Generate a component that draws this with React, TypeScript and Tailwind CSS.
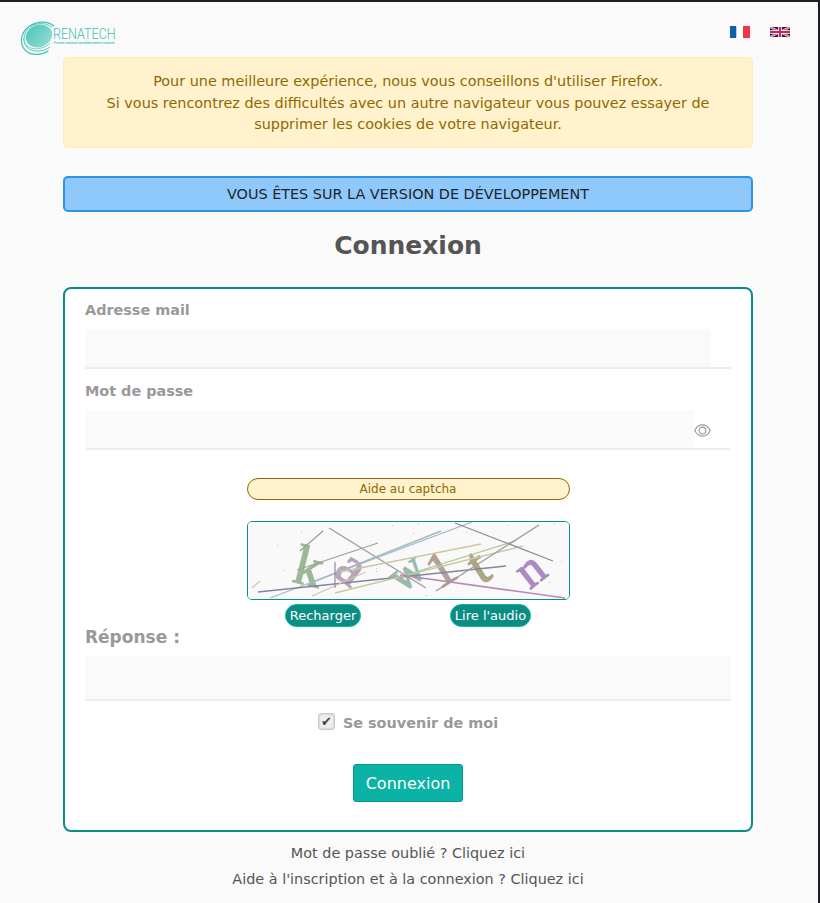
import React from "react";

const lines: [number, number, number, number, string, number][] = [
  [300, 551, 323, 531, "#9a9a84", 1.2],
  [329, 528, 426, 588, "#a79a90", 1.4],
  [297, 570, 378, 543, "#a09c98", 1.2],
  [313, 582, 441, 531, "#9fbcc4", 1.4],
  [270, 598, 472, 522, "#a3b8c4", 1.2],
  [258, 592, 506, 566, "#85859c", 1.5],
  [312, 596, 366, 572, "#cdc9a4", 1.2],
  [335, 593, 523, 546, "#cbc9a2", 1.3],
  [340, 572, 481, 544, "#cfc79e", 1.3],
  [400, 577, 515, 541, "#a9c498", 1.3],
  [335, 562, 335, 588, "#9585a8", 1.2],
  [455, 523, 553, 561, "#8c8c9c", 1.3],
  [436, 591, 539, 525, "#a09c98", 1.3],
  [400, 575, 565, 598, "#b58bb5", 1.6],
  [252, 588, 260, 581, "#c8c8b0", 1.1],
];

const dots: [number, number][] = [
  [251, 526], [277, 545], [284, 570], [376, 568], [376, 571], [418, 524], [413, 533],
  [554, 524], [507, 525], [561, 561], [549, 582], [301, 531], [426, 595], [392, 525], [466, 532],
];

const glyphs: [string, number, number, number, number, string][] = [
  ["k", 308, 585, 56, 14, "#9db899"],
  ["a", 350, 584, 54, 38, "#bba2bf"],
  ["w", 408, 586, 46, -38, "#98bbb0"],
  ["1", 443, 585, 50, -32, "#b3a197"],
  ["t", 480, 583, 56, -32, "#aea785"],
  ["n", 532, 585, 50, -38, "#ac8abf"],
];

function Captcha() {
  return (
    <svg viewBox="248 522 321 77" className="block h-[77px] w-full bg-[#f9f9f9]" aria-label="captcha">
      {glyphs.map(([ch, x, y, size, r, color], i) => (
        <text
          key={i}
          x={x}
          y={y}
          fontSize={size}
          fill={color}
          stroke={color}
          strokeWidth="1.2"
          textAnchor="middle"
          transform={`rotate(${r} ${x} ${y - size / 4})`}
          fontFamily="Liberation Serif, serif"
          fontWeight="400"
        >
          {ch}
        </text>
      ))}
      {lines.map(([a, b, c, d, color, w], i) => (
        <line key={i} x1={a} y1={b} x2={c} y2={d} stroke={color} strokeWidth={w} />
      ))}
      {dots.map(([x, y], i) => (
        <rect key={i} x={x} y={y} width="1" height="1" fill="#b9c4bd" />
      ))}
    </svg>
  );
}

function Logo() {
  return (
    <svg viewBox="20 20 98 37" className="h-[37px] w-[98px] overflow-visible" aria-label="Renatech">
      <defs>
        <linearGradient id="disc" x1="0" y1="0" x2="0.7" y2="1">
          <stop offset="0" stopColor="#4cc4b8" />
          <stop offset="1" stopColor="#8ddbd3" />
        </linearGradient>
      </defs>
      <ellipse cx="39" cy="36" rx="13.6" ry="11" fill="url(#disc)" transform="rotate(-22 39 36)" />
      <g fill="none" stroke="#3fc1b4" strokeLinecap="round">
        <path d="M53.500 26C48 20.500 37 21 29 26.500C20 33 19 45 26 51C32 56 42 55 48 51" strokeWidth="1.2" />
        <path d="M51.500 27C45 22 36 22.500 29.500 28C22.500 34 22 43 28 48C34 53 44 51.500 50 47" strokeWidth="0.9" />
        <path d="M24 39C24 50 40 52 50 43.500" strokeWidth="0.7" />
      </g>
      <text transform="translate(53 39) scale(0.92 1.03)" fontSize="13.6" fill="#42bfb3" fontFamily="Roboto, sans-serif" fontWeight="300">RENATECH</text>
      <text x="54" y="43.500" fontSize="3.35" fill="#42bfb3" fontFamily="Roboto, sans-serif" fontWeight="500">French national nanofabrication network</text>
    </svg>
  );
}

function FlagFr() {
  return (
    <svg viewBox="0 0 20 12" className="h-3 w-5">
      <path fill="#0f5fae" d="M0 0h6.500v12H0z" />
      <path fill="#fff" d="M6.500 0h6.500v12h-6.500z" />
      <path fill="#f03545" d="M13 0H20v12h-7z" />
    </svg>
  );
}

function FlagGb() {
  return (
    <svg viewBox="0 0 20 10" className="h-2.5 w-5">
      <path fill="#12206c" d="M0 0h20v10H0z" />
      <path stroke="#fff" strokeWidth="2" d="M0 0l20 10M20 0L0 10" />
      <path stroke="#d8203f" strokeWidth=".8" d="M0 0l20 10M20 0L0 10" />
      <path stroke="#fff" strokeWidth="3.6" d="M10 0v10M0 5h20" />
      <path stroke="#d8203f" strokeWidth="2" d="M10 0v10M0 5h20" />
    </svg>
  );
}

function Eye() {
  return (
    <svg viewBox="0 0 17 13" className="h-[13px] w-[17px]" fill="none" stroke="#999" strokeWidth="1.1">
      <path d="M.7 6.500C2.500 3 5.300.9 8.500.9S14.500 3 16.300 6.500C14.500 10 11.700 12.100 8.500 12.100S2.500 10 .7 6.500Z" />
      <circle cx="8.500" cy="6.500" r="3.400" />
    </svg>
  );
}

export default function App() {
  return (
    <div className="h-[903px] w-[820px] overflow-hidden border-t-2 border-r-2 border-t-[#231f20] border-r-[#1e1f22] bg-[#fafafa] font-['DejaVu_Sans',sans-serif] text-[14.4px] leading-[21.6px] text-[#555]">
      <header className="flex h-[55px] items-start justify-between pl-5 pr-7">
        <div className="pt-[18px]"><Logo /></div>
        <div className="flex items-center gap-5 pt-6">
          <FlagFr />
          <FlagGb />
        </div>
      </header>
      <main className="ml-[63px] flex w-[690px] flex-col">
        <div className="h-[91px] rounded border border-[#ffeeba] bg-[#fff2cd] px-5 pt-[13px] text-center text-[#8f6900]">
          Pour une meilleure expérience, nous vous conseillons d'utiliser Firefox.
          <br />
          Si vous rencontrez des difficultés avec un autre navigateur vous pouvez essayer de supprimer les cookies de votre navigateur.
        </div>
        <div className="mt-7 flex h-9 items-center justify-center rounded-[5px] border-2 border-[#2f93e8] bg-[#8fc8fa] pt-[2px] text-[#212529]">
          VOUS ÊTES SUR LA VERSION DE DÉVELOPPEMENT
        </div>
        <h1 className="mt-[17px] text-center text-[25px] leading-[34px] font-bold">Connexion</h1>
        <form className="mt-[24px] flex h-[545px] flex-col rounded-lg border-2 border-[#0b8d82] bg-white px-5 pt-[11px] font-bold text-[#999]">
          <label className="h-[21px]">Adresse mail</label>
          <div className="mt-2 flex h-10 border-b-2 border-[#eee]">
            <div className="w-[626px] bg-[#fafafa]" />
          </div>
          <label className="mt-3 h-[21px]">Mot de passe</label>
          <div className="mt-2 flex h-10 items-center border-b-2 border-[#eee]">
            <div className="h-full w-[609px] bg-[#fafafa]" />
            <div className="pt-[3px]"><Eye /></div>
          </div>
          <div className="mx-auto mt-7 flex h-[22px] w-[323px] items-center justify-center rounded-full border border-[#8f6900] bg-[#fff2cd] pt-px text-[12px] font-normal text-[#8f6900]">
            Aide au captcha
          </div>
          <div className="mx-auto mt-[21px] h-[79px] w-[323px] overflow-hidden rounded-[5px] border border-[#0b8d82]">
            <Captcha />
          </div>
          <div className="mx-auto mt-1 flex w-[246px] justify-between text-[13px] font-normal text-white">
            <button type="button" className="flex h-[23px] w-[76px] items-center justify-center rounded-full border border-[#0bb5a5] bg-[#0b8d82]">Recharger</button>
            <button type="button" className="flex h-[23px] w-[81px] items-center justify-center rounded-full border border-[#0bb5a5] bg-[#0b8d82]">Lire l'audio</button>
          </div>
          <label className="text-[17px] leading-5">Réponse :</label>
          <div className="mt-[9px] h-[45px] border-b-2 border-[#eee] bg-[#fafafa]" />
          <label className="mt-3 flex h-[22px] items-center justify-center gap-2">
            <span className="mb-[5px] flex h-[17px] w-[17px] items-center justify-center rounded-[3px] border border-[#ccc] bg-[#eee] text-[13px] font-normal text-[#444] shadow-[inset_0_0_2px_#aaa]">✔</span>
            Se souvenir de moi
          </label>
          <button type="button" className="mx-auto mt-[29px] h-[38px] w-[110px] rounded-[3px] border border-[#0a978b] bg-[#0bb2a6] pt-px text-[16px] font-normal text-white">
            Connexion
          </button>
        </form>
        <div className="mt-[8px] text-center leading-[26px]">
          <p>Mot de passe oublié ? Cliquez ici</p>
          <p>Aide à l'inscription et à la connexion ? Cliquez ici</p>
        </div>
      </main>
    </div>
  );
}
